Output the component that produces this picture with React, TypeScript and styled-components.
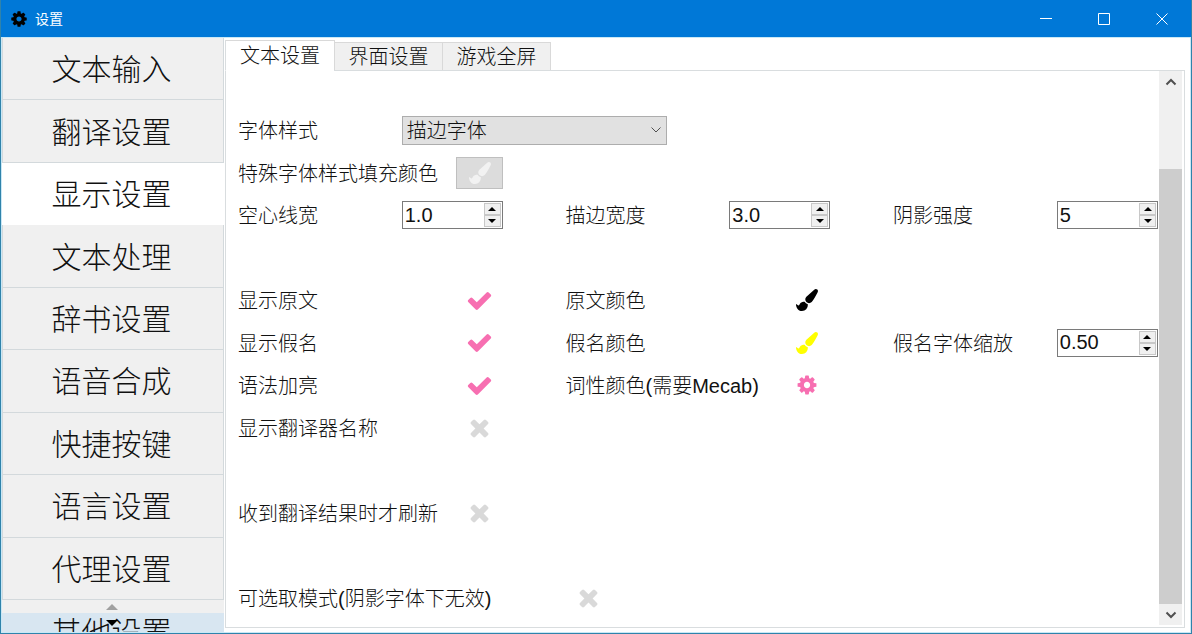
import React, { useId, useRef, useState } from "react";
import styled, { createGlobalStyle, css } from "styled-components";

const GlobalStyle = createGlobalStyle`
  * { box-sizing: border-box; }
  body { margin: 0; }
  body, button, input, select {
    font-family: "Liberation Sans", "Noto Sans CJK SC", sans-serif;
    font-weight: 300;
    color: #111;
  }
  button { padding: 0; border: 0; background: none; }
`;

const Window = styled.div`
  display: flex;
  flex-direction: column;
  height: 100vh;
  border: solid #2f83ab;
  border-width: 0 1px 1px;
  background: #fff;
  overflow: hidden;
`;

const TitleBar = styled.header`
  flex: none;
  display: flex;
  align-items: center;
  height: 37px;
  padding-left: 9px;
  background: #0078d7;
  color: #fff;
`;

const Title = styled.h1`
  flex: 1;
  margin: 0 0 0 7px;
  font-size: 14px;
  font-weight: 400;
  line-height: 20px;
`;

const CaptionButton = styled.button`
  width: 58px;
  height: 37px;
  display: grid;
  place-items: center;
  color: #fff;
`;

const Body = styled.div`
  flex: 1;
  min-height: 0;
  display: flex;
  border: 1px solid #c9e8f6;
`;

const Sidebar = styled.nav`
  flex: none;
  display: flex;
  flex-direction: column;
  width: 222px;
`;

const NavList = styled.div`
  flex: 1;
  display: grid;
  grid-auto-rows: 1fr;
`;

const NavButton = styled.button<{ $active?: boolean }>`
  padding: 3px 3px 0 0;
  border: solid #d3d9dc;
  border-width: 0 1px 1px;
  background: #f0f0f0;
  font-size: 30px;
  line-height: 40px;
  ${(p) => p.$active && css`
    background: #fff;
    border-color: #fff;
  `}
`;

const ScrollUp = styled.button`
  flex: none;
  display: grid;
  place-items: center;
  height: 13px;
  padding-right: 3px;
  background: #f0f0f0;
`;

const NextPeek = styled.div`
  flex: none;
  display: grid;
  height: 19px;
  overflow: hidden;
  background: #d8e6f1;
`;

const PeekButton = styled.button`
  grid-area: 1 / 1;
  height: 40px;
  padding-right: 3px;
  font-size: 30px;
  line-height: 40px;
`;

const ScrollDown = styled.button`
  grid-area: 1 / 1;
  z-index: 1;
  justify-self: center;
  align-self: start;
  display: grid;
  place-items: center;
  height: 19px;
  padding-right: 3px;
`;

const Content = styled.main`
  flex: 1;
  min-width: 0;
  display: flex;
  flex-direction: column;
  margin: 2px 5px 4px 1px;
`;

const Tabs = styled.div`
  flex: none;
  display: flex;
  align-items: flex-end;
  height: 30px;
  border-left: 1px solid #d9dddf;
`;

const Tab = styled.button<{ $active?: boolean }>`
  width: 108px;
  height: 28px;
  border: solid #d9d9d9;
  border-width: 1px 1px 0 0;
  background: #f0f0f0;
  font-size: 20px;
  line-height: 26px;
  ${(p) => p.$active && css`
    width: 109px;
    height: 30px;
    background: #fff;
  `}
`;

const Pane = styled.section`
  flex: 1;
  min-height: 0;
  display: flex;
  border: 1px solid #d9dddf;
  border-top-color: transparent;
  background: linear-gradient(#d9dddf, #d9dddf) 109px 0 / 100% 1px no-repeat border-box;
`;

const Form = styled.form`
  flex: 1;
  display: grid;
  grid-template-rows: repeat(12, 1fr);
  padding: 38px 1px 8px 12px;
`;

const Row = styled.div`
  display: grid;
  grid-template-columns: repeat(17, minmax(0, 1fr));
  column-gap: 8px;
  align-items: center;
`;

const Label = styled.label<{ $col?: number; $span?: number }>`
  grid-column: ${(p) => p.$col ?? 1} / span ${(p) => p.$span ?? 3};
  padding-top: 2px;
  font-size: 20px;
  line-height: 28px;
  white-space: nowrap;
`;

const SelectBox = styled.div`
  grid-column: 4 / span 5;
  display: grid;
  align-items: center;
  height: 29px;
  svg {
    grid-area: 1 / 1;
    justify-self: end;
    margin-right: 5px;
    pointer-events: none;
  }
`;

const Select = styled.select`
  grid-area: 1 / 1;
  width: 100%;
  height: 29px;
  padding: 2px 4px 0;
  appearance: none;
  border: 1px solid #adadad;
  border-radius: 0;
  background: #e1e1e1;
  font-size: 20px;
`;

const IconCell = styled.div<{ $col: number }>`
  grid-column: ${(p) => p.$col} / span 1;
  display: grid;
  place-items: center;
  height: 32px;
  svg { grid-area: 1 / 1; pointer-events: none; }
`;

const IconButton = styled.button<{ $color: string; $framed?: boolean }>`
  display: grid;
  place-items: center;
  width: 100%;
  height: 32px;
  color: ${(p) => p.$color};
  ${(p) => p.$framed && css`
    border: 1px solid #bfbfbf;
    background: #dcdcdc;
  `}
`;

const CheckInput = styled.input`
  grid-area: 1 / 1;
  width: 100%;
  height: 100%;
  margin: 0;
  appearance: none;
`;

const SpinBox = styled.div<{ $col: number }>`
  grid-column: ${(p) => p.$col} / span 2;
  display: flex;
  height: 28px;
  padding: 1px;
  border: 1px solid #7a7a7a;
  background: #fff;
`;

const SpinInput = styled.input`
  flex: 1;
  min-width: 0;
  padding: 0 0 0 1px;
  border: 0;
  outline: 0;
  appearance: textfield;
  background: none;
  font-size: 20px;
  font-weight: 400;
  &::-webkit-inner-spin-button { appearance: none; margin: 0; }
`;

const SpinArrows = styled.div`
  flex: none;
  display: grid;
  grid-template-rows: 1fr 1fr;
  width: 17px;
`;

const SpinArrow = styled.button`
  display: grid;
  place-items: center;
  min-height: 0;
  border: 1px solid #c8c8c8;
  background: #f0f0f0;
`;

const ScrollBar = styled.div`
  flex: none;
  display: flex;
  flex-direction: column;
  width: 23px;
  margin: 0 2px 2px 0;
  background: #f0f0f0;
`;

const ScrollButton = styled.button`
  display: grid;
  place-items: center;
  height: 21px;
  color: #505050;
`;

const Track = styled.div`
  flex: 1;
  display: flex;
  flex-direction: column;
  justify-content: flex-end;
`;

const Thumb = styled.div`
  height: 85%;
  background: #cdcdcd;
`;

const PATHS = {
  check:
    "M1671 566q0 40-28 68l-724 724-136 136q-28 28-68 28t-68-28l-136-136-362-362q-28-28-28-68t28-68l136-136q28-28 68-28t68 28l294 295 656-657q28-28 68-28t68 28l136 136q28 28 28 68z",
  times:
    "M1490 1322q0 40-28 68l-136 136q-28 28-68 28t-68-28l-294-294-294 294q-28 28-68 28t-68-28l-136-136q-28-28-28-68t28-68l294-294-294-294q-28-28-28-68t28-68l136-136q28-28 68-28t68 28l294 294 294-294q28-28 68-28t68 28l136 136q28 28 28 68t-28 68l-294 294 294 294q28 28 28 68z",
  gear:
    "M1152 896q0-106-75-181t-181-75-181 75-75 181 75 181 181 75 181-75 75-181zm512-109v222q0 12-8 23t-20 13l-185 28q-19 54-39 91 35 50 107 138 10 12 10 25t-9 23q-27 37-99 108t-94 71q-12 0-26-9l-138-108q-44 23-91 38-16 136-29 186-7 28-36 28h-222q-14 0-24.500-8.500t-11.500-21.500l-28-184q-49-16-90-37l-141 107q-10 9-25 9-14 0-25-11-126-114-165-168-7-10-7-23 0-12 8-23 15-21 51-66.500t54-70.500q-27-50-41-99l-183-27q-13-2-21-12.500t-8-23.500v-222q0-12 8-23t19-13l186-28q14-46 39-92-40-57-107-138-10-12-10-24 0-10 9-23 26-36 98.500-107.500t94.500-71.500q13 0 26 10l138 107q44-23 91-38 16-136 29-186 7-28 36-28h222q14 0 24.500 8.500t11.500 21.500l28 184q49 16 90 37l142-107q9-9 24-9 13 0 25 10 129 119 165 170 7 8 7 22 0 12-8 23-15 21-51 66.500t-54 70.500q26 50 41 98l183 28q13 2 21 12.500t8 23.500z",
  brush:
    "M1615 0q70 0 122.500 46.500t52.500 116.500q0 63-45 151-332 629-465 752-97 91-218 91-126 0-216.500-92.500t-90.500-219.500q0-128 92-212l638-579q59-54 130-54zm-909 1034q39 76 106.500 130t150.500 76l1 71q4 213-129.500 347t-348.500 134q-123 0-218-46.500t-152.500-127.500-86.500-183-29-220q7 5 41 30t62 44.500 59 36.500 46 17q41 0 55-37 25-66 57.500-112.500t69.500-76 88-47.500 103-25.500 125-10.500z",
};

function Icon({ name, size, color = "currentColor" }: { name: keyof typeof PATHS; size: number; color?: string }) {
  return (
    <svg width={size} height={size} viewBox="0 0 1792 1792" fill={color} aria-hidden="true">
      <path d={PATHS[name]} />
    </svg>
  );
}

function Triangle({ up, size = 8, color = "#000" }: { up?: boolean; size?: number; color?: string }) {
  return (
    <svg width={size} height={size / 2} viewBox="0 0 8 4" fill={color} aria-hidden="true">
      <path d={up ? "M0 4L4 0L8 4Z" : "M0 0L4 4L8 0Z"} />
    </svg>
  );
}

function Chevron({ up, width = 2 }: { up?: boolean; width?: number }) {
  return (
    <svg width="12" height="8" viewBox="0 0 12 8" fill="none" stroke="#505050" strokeWidth={width} aria-hidden="true">
      <path d={up ? "M1.500 6.500L6 2L10.500 6.500" : "M1.500 1.500L6 6L10.500 1.500"} />
    </svg>
  );
}

function Spin({ label, col, value, step }: { label: string; col: number; value: string; step: string }) {
  const id = useId();
  const ref = useRef<HTMLInputElement>(null);
  return (
    <>
      <Label $col={col} htmlFor={id}>{label}</Label>
      <SpinBox $col={col + 3}>
        <SpinInput id={id} ref={ref} type="number" step={step} defaultValue={value} />
        <SpinArrows>
          <SpinArrow type="button" aria-label="增加" onClick={() => ref.current?.stepUp()}><Triangle up /></SpinArrow>
          <SpinArrow type="button" aria-label="减少" onClick={() => ref.current?.stepDown()}><Triangle /></SpinArrow>
        </SpinArrows>
      </SpinBox>
    </>
  );
}

function Toggle({ label, on = false, span = 4, col = 5 }: { label: string; on?: boolean; span?: number; col?: number }) {
  const id = useId();
  const [checked, setChecked] = useState(on);
  return (
    <>
      <Label $span={span} htmlFor={id}>{label}</Label>
      <IconCell $col={col}>
        <CheckInput id={id} type="checkbox" checked={checked} onChange={(e) => setChecked(e.target.checked)} />
        <Icon name={checked ? "check" : "times"} size={27} color={checked ? "#f76fb1" : "#d9d9d9"} />
      </IconCell>
    </>
  );
}

function Picker({ label, icon, color }: { label: string; icon: "brush" | "gear"; color: string }) {
  const id = useId();
  return (
    <>
      <Label $col={7} $span={4} htmlFor={id}>{label}</Label>
      <IconCell $col={11}>
        <IconButton id={id} type="button" $color={color}><Icon name={icon} size={22} /></IconButton>
      </IconCell>
    </>
  );
}

const SECTIONS = ["文本输入", "翻译设置", "显示设置", "文本处理", "辞书设置", "语音合成", "快捷按键", "语言设置", "代理设置"];
const TABS = ["文本设置", "界面设置", "游戏全屏"];

export default function App() {
  const [section, setSection] = useState("显示设置");
  const [tab, setTab] = useState("文本设置");
  return (
    <>
      <GlobalStyle />
      <Window>
        <TitleBar>
          <Icon name="gear" size={18} color="#000" />
          <Title>设置</Title>
          <CaptionButton aria-label="最小化">
            <svg width="12" height="12" stroke="currentColor"><path d="M0 5.500H12" /></svg>
          </CaptionButton>
          <CaptionButton aria-label="最大化">
            <svg width="12" height="12" fill="none" stroke="currentColor"><path d="M.5.500H11.500V11.500H.5Z" /></svg>
          </CaptionButton>
          <CaptionButton aria-label="关闭">
            <svg width="12" height="12" stroke="currentColor"><path d="M.5.500L11.500 11.500M11.500.500L.5 11.500" /></svg>
          </CaptionButton>
        </TitleBar>
        <Body>
          <Sidebar>
            <NavList>
              {SECTIONS.map((s) => (
                <NavButton key={s} $active={s === section} onClick={() => setSection(s)}>{s}</NavButton>
              ))}
            </NavList>
            <ScrollUp aria-label="向上滚动"><Triangle up size={12} color="#a0a0a0" /></ScrollUp>
            <NextPeek>
              <PeekButton>其他设置</PeekButton>
              <ScrollDown aria-label="向下滚动"><Triangle size={12} /></ScrollDown>
            </NextPeek>
          </Sidebar>
          <Content>
            <Tabs role="tablist">
              {TABS.map((t) => (
                <Tab key={t} role="tab" aria-selected={t === tab} $active={t === tab} onClick={() => setTab(t)}>{t}</Tab>
              ))}
            </Tabs>
            <Pane role="tabpanel">
              <Form>
                <Row>
                  <Label htmlFor="font-style">字体样式</Label>
                  <SelectBox>
                    <Select id="font-style"><option>描边字体</option></Select>
                    <Chevron width={1} />
                  </SelectBox>
                </Row>
                <Row>
                  <Label $span={4} htmlFor="fill-color">特殊字体样式填充颜色</Label>
                  <IconCell $col={5}>
                    <IconButton id="fill-color" type="button" $color="#f2f2f2" $framed><Icon name="brush" size={22} /></IconButton>
                  </IconCell>
                </Row>
                <Row>
                  <Spin label="空心线宽" col={1} value="1.0" step="0.1" />
                  <Spin label="描边宽度" col={7} value="3.0" step="0.1" />
                  <Spin label="阴影强度" col={13} value="5" step="1" />
                </Row>
                <Row />
                <Row>
                  <Toggle label="显示原文" on />
                  <Picker label="原文颜色" icon="brush" color="#000" />
                </Row>
                <Row>
                  <Toggle label="显示假名" on />
                  <Picker label="假名颜色" icon="brush" color="#ff0" />
                  <Spin label="假名字体缩放" col={13} value="0.50" step="0.05" />
                </Row>
                <Row>
                  <Toggle label="语法加亮" on />
                  <Picker label="词性颜色(需要Mecab)" icon="gear" color="#f76fb1" />
                </Row>
                <Row><Toggle label="显示翻译器名称" /></Row>
                <Row />
                <Row><Toggle label="收到翻译结果时才刷新" /></Row>
                <Row />
                <Row><Toggle label="可选取模式(阴影字体下无效)" span={6} col={7} /></Row>
              </Form>
              <ScrollBar>
                <ScrollButton type="button" aria-label="向上"><Chevron up /></ScrollButton>
                <Track><Thumb /></Track>
                <ScrollButton type="button" aria-label="向下"><Chevron /></ScrollButton>
              </ScrollBar>
            </Pane>
          </Content>
        </Body>
      </Window>
    </>
  );
}
